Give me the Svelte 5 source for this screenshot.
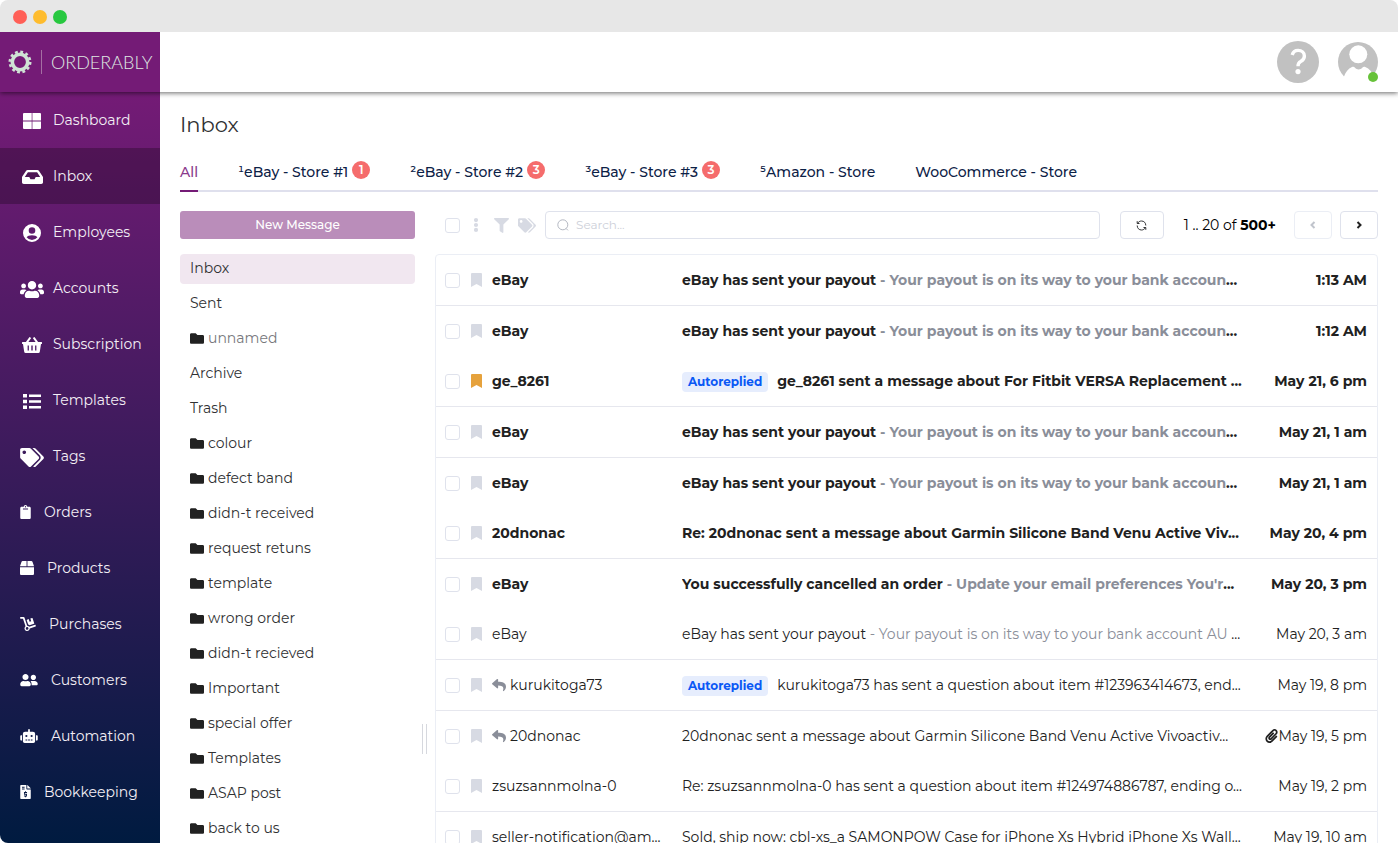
<script lang="ts">
  type Icon = { box: string; d: string };

  const icons: Record<string, Icon> = {
    grid: { box: '0 0 18 16', d: 'M1 0h7.700v7.600H0V1q0-1 1-1zM9.400 0H17q1 0 1 1v6.600H9.400zM0 8.400h8.700V16H1q-1 0-1-1zM9.400 8.400H18V15q0 1-1 1H9.400z' },
    inbox: { box: '0 64 576 384', d: 'M567.938 243.908L462.25 85.374A48.003 48.003 0 0 0 422.311 64H153.689a48 48 0 0 0-39.938 21.374L8.062 243.908A47.994 47.994 0 0 0 0 270.533V400c0 26.51 21.49 48 48 48h480c26.51 0 48-21.49 48-48V270.533a47.994 47.994 0 0 0-8.062-26.625zM162.252 128h251.497l85.333 128H376l-32 64H232l-32-64H76.918l85.334-128z' },
    user: { box: '0 0 18 18', d: 'M9 0a9 9 0 1 1 0 18A9 9 0 0 1 9 0zM9 3.200a3.300 3.300 0 1 0 0 6.600 3.300 3.300 0 0 0 0-6.600zM9 11.200c-2.500 0-4.700.8-5.400 2.100a6.800 6.800 0 0 0 10.800 0c-.7-1.300-2.900-2.100-5.400-2.100z' },
    users: { box: '0 32 640 448', d: 'M96 224c35.3 0 64-28.7 64-64s-28.7-64-64-64-64 28.7-64 64 28.7 64 64 64zm448 0c35.3 0 64-28.7 64-64s-28.7-64-64-64-64 28.7-64 64 28.7 64 64 64zm32 32h-64c-17.6 0-33.5 7.1-45.1 18.6 40.3 22.1 68.9 62 75.1 109.4h66c17.7 0 32-14.3 32-32v-32c0-35.3-28.7-64-64-64zm-256 0c61.9 0 112-50.1 112-112S381.9 32 320 32 208 82.1 208 144s50.1 112 112 112zm76.8 32h-8.3c-20.8 10-43.9 16-68.5 16s-47.6-6-68.5-16h-8.3C179.6 288 128 339.6 128 403.2V432c0 26.5 21.5 48 48 48h288c26.5 0 48-21.5 48-48v-28.8c0-63.600-51.600-115.200-115.200-115.200zm-223.700-13.400C161.500 263.100 145.600 256 128 256H64c-35.300 0-64 28.700-64 64v32c0 17.700 14.300 32 32 32h65.900c6.300-47.400 34.900-87.300 75.200-109.400z' },
    basket: { box: '0 0 20 16', d: 'M7.500 0 9.200 1 6.400 5H3.900zM12.500 0 10.800 1l2.800 4h2.500zM.5 5h19q.5 0 .5.500v1q0 .6-.6.600H19l-1.200 7.700q-.2 1.200-1.400 1.200H3.600q-1.200 0-1.400-1.200L1 7.100H.6Q0 7.100 0 6.500v-1Q0 5 .5 5zM5.600 8.500v5h1.300v-5zM9.300 8.500v5h1.400v-5zM13.100 8.500v5h1.300v-5z' },
    list: { box: '0 0 18 15', d: 'M0 0h4v3.500H0zM6 .500h12v2.500H6zM0 5.700h4v3.500H0zM6 6.200h12v2.500H6zM0 11.500h4V15H0zM6 12h12v2.500H6z' },
    tags: { box: '0 0 640 512', d: 'M497.941 225.941L286.059 14.059A48 48 0 0 0 252.118 0H48C21.49 0 0 21.49 0 48v204.118a48 48 0 0 0 14.059 33.941l211.882 211.882c18.744 18.745 49.136 18.746 67.882 0l204.118-204.118c18.745-18.745 18.745-49.137 0-67.882zM112 160c-26.51 0-48-21.49-48-48s21.49-48 48-48 48 21.49 48 48-21.49 48-48 48zm513.941 133.823L421.823 497.941c-18.745 18.745-49.137 18.745-67.882 0l-.36-.36L527.64 323.522c16.999-16.999 26.36-39.6 26.36-63.64s-9.362-46.641-26.36-63.64L331.397 0h48.721a48 48 0 0 1 33.941 14.059l211.882 211.882c18.745 18.745 18.745 49.137 0 67.882z' },
    clipboard: { box: '0 0 384 512', d: 'M384 112v352c0 26.51-21.49 48-48 48H48c-26.51 0-48-21.49-48-48V112c0-26.51 21.49-48 48-48h80c0-35.29 28.71-64 64-64s64 28.71 64 64h80c26.51 0 48 21.49 48 48zM192 40c-13.255 0-24 10.745-24 24s10.745 24 24 24 24-10.745 24-24-10.745-24-24-24m96 114v-20a6 6 0 0 0-6-6H102a6 6 0 0 0-6 6v20a6 6 0 0 0 6 6h180a6 6 0 0 0 6-6z' },
    box: { box: '0 0 512 512', d: 'M509.5 184.6L458.9 32.8C452.4 13.2 434.1 0 413.4 0H272v192h238.7c-.4-2.500-.4-5-1.200-7.400zM240 0H98.600c-20.700 0-39 13.200-45.500 32.800L2.500 184.600c-.8 2.400-.8 4.900-1.200 7.400H240V0zM0 224v240c0 26.500 21.500 48 48 48h416c26.500 0 48-21.500 48-48V224H0z' },
    dolly: { box: '0 0 576 512', d: 'M294.2 277.7c18 5 34.700 13.400 49.500 24.700l161.500-53.800c8.400-2.800 12.900-11.900 10.100-20.200L454.900 47.200c-2.800-8.400-11.900-12.900-20.200-10.100l-61.100 20.400 33.100 99.400L346 177l-33.100-99.400-61.600 20.500c-8.400 2.800-12.900 11.900-10.100 20.200l53 159.400zm281 48.700L565 296c-2.800-8.400-11.900-12.900-20.200-10.100l-213.500 71.200c-17.200-22-43.600-36.400-73.500-37L158.400 21.900C154 8.800 141.800 0 128 0H16C7.200 0 0 7.200 0 16v32c0 8.800 7.200 16 16 16h88.900l92.200 276.700c-26.100 20.400-41.700 53.600-36 90.500 6.100 39.400 37.900 72.300 77.300 79.200 60.200 10.700 112.300-34.800 113.400-92.600l213.300-71.200c8.300-2.800 12.900-11.800 10.100-20.200zM256 464c-26.500 0-48-21.500-48-48s21.500-48 48-48 48 21.500 48 48-21.500 48-48 48z' },
    friends: { box: '0 0 640 512', d: 'M192 256c61.900 0 112-50.100 112-112S253.900 32 192 32 80 82.100 80 144s50.100 112 112 112zm76.800 32h-8.300c-20.800 10-43.900 16-68.500 16s-47.600-6-68.500-16h-8.300C51.600 288 0 339.600 0 403.200V432c0 26.500 21.500 48 48 48h288c26.500 0 48-21.500 48-48v-28.800c0-63.600-51.600-115.200-115.200-115.200zM480 256c53 0 96-43 96-96s-43-96-96-96-96 43-96 96 43 96 96 96zm48 32h-3.800c-13.900 4.800-28.600 8-44.200 8s-30.300-3.200-44.200-8H432c-20.400 0-39.200 5.900-55.700 15.400 24.400 26.300 39.700 61.200 39.700 99.800v38.400c0 2.200-.5 4.300-.6 6.400H592c26.500 0 48-21.500 48-48 0-61.900-50.100-112-112-112z' },
    robot: { box: '0 0 640 512', d: 'M32,224H64V416H32A31.962,31.962,0,0,1,0,384V256A31.962,31.962,0,0,1,32,224Zm512-48V448a64.063,64.063,0,0,1-64,64H160a64.063,64.063,0,0,1-64-64V176a79.974,79.974,0,0,1,80-80H288V32a32,32,0,0,1,64,0V96H464A79.974,79.974,0,0,1,544,176ZM264,256a40,40,0,1,0-40,40A39.997,39.997,0,0,0,264,256Zm-8,128H192v32h64Zm96,0H288v32h64ZM456,256a40,40,0,1,0-40,40A39.997,39.997,0,0,0,456,256Zm-8,128H384v32h64ZM640,256V384a31.962,31.962,0,0,1-32,32H576V224h32A31.962,31.962,0,0,1,640,256Z' },
    invoice: { box: '0 0 384 512', d: 'M224 136V0H24C11 0 0 11 0 24v464c0 13 11 24 24 24h336c13 0 24-11 24-24V160H248c-13 0-24-11-24-24zM64 64h96v32H64zM64 128h96v32H64zM384 122v6H256V0h6zM176 224h32v32h40v32h-80v32h80v96h-40v32h-32v-32h-40v-32h80v-32h-80v-96h40z' },
    folder: { box: '0 64 512 384', d: 'M464 128H272l-64-64H48C21.49 64 0 85.49 0 112v288c0 26.51 21.49 48 48 48h416c26.51 0 48-21.49 48-48V176c0-26.51-21.49-48-48-48z' },
    bookmark: { box: '0 0 11 14', d: 'M0 1q0-1 1-1h9q1 0 1 1v13l-5.500-3L0 14z' },
    reply: { box: '0 0 512 512', d: 'M8.309 189.836L184.313 37.851C199.719 24.546 224 35.347 224 56.015v80.053c160.629 1.839 288 34.032 288 186.258 0 61.441-39.581 122.309-83.333 154.132-13.653 9.931-33.111-2.533-28.077-18.631 45.344-145.012-21.507-183.51-176.59-185.742V360c0 20.7-24.3 31.453-39.687 18.164l-176.004-152c-11.071-9.562-11.086-26.753 0-36.328z' },
    clip: { box: '0 0 448 512', d: 'M43.246 466.142c-58.43-60.289-57.341-157.511 1.386-217.581L254.392 34c44.316-45.332 116.351-45.336 160.671 0 43.89 44.894 43.943 117.329 0 162.276L232.214 383.128c-29.855 30.537-78.633 30.111-107.982-.998-28.275-29.97-27.368-77.473 1.452-106.953l143.743-146.835c6.182-6.314 16.312-6.422 22.626-.241l22.861 22.379c6.315 6.182 6.422 16.312.241 22.626L171.427 319.927c-4.932 5.045-5.236 13.428-.648 18.292 4.372 4.634 11.245 4.711 15.688.165l182.849-186.851c19.613-20.062 19.613-52.725-.011-72.798-19.189-19.627-49.957-19.637-69.154 0L90.39 293.295c-34.763 35.56-35.299 93.12-1.191 128.313 34.01 35.093 88.985 35.137 123.058.286l172.06-175.999c6.177-6.319 16.307-6.433 22.626-.256l22.877 22.364c6.319 6.177 6.434 16.307.256 22.626l-172.06 175.998c-59.576 60.938-155.943 60.216-214.77-.485z' },
    dots: { box: '0 0 6 14', d: 'M3 0a2.100 2.100 0 1 1 0 4.200A2.100 2.100 0 0 1 3 0zM3 4.900a2.100 2.100 0 1 1 0 4.200 2.100 2.100 0 0 1 0-4.200zM3 9.800A2.100 2.100 0 1 1 3 14a2.100 2.100 0 0 1 0-4.200z' },
    filter: { box: '0 0 512 512', d: 'M487.976 0H24.028C2.71 0-8.047 25.866 7.058 40.971L192 225.941V432c0 7.831 3.821 15.17 10.237 19.662l80 55.98C298.02 518.69 320 507.493 320 487.98V225.941l184.947-184.97C520.021 25.896 509.338 0 487.976 0z' }
  };

  // large: icon sits in a 24px slot; the rest keep their own width
  const menu = [
    { label: 'Dashboard', icon: 'grid', w: 18, h: 16, large: true },
    { label: 'Inbox', icon: 'inbox', w: 21, h: 14, large: true },
    { label: 'Employees', icon: 'user', w: 18, h: 18, large: true },
    { label: 'Accounts', icon: 'users', w: 24, h: 17, large: true },
    { label: 'Subscription', icon: 'basket', w: 20, h: 16, large: true },
    { label: 'Templates', icon: 'list', w: 18, h: 15, large: true },
    { label: 'Tags', icon: 'tags', w: 24, h: 19, large: true },
    { label: 'Orders', icon: 'clipboard', w: 11, h: 14 },
    { label: 'Products', icon: 'box', w: 14, h: 14 },
    { label: 'Purchases', icon: 'dolly', w: 16, h: 14 },
    { label: 'Customers', icon: 'friends', w: 18, h: 14 },
    { label: 'Automation', icon: 'robot', w: 18, h: 14 },
    { label: 'Bookkeeping', icon: 'invoice', w: 11, h: 14 }
  ];

  const tabs = [
    { label: 'All', count: 0 },
    { label: '¹eBay - Store #1', count: 1 },
    { label: '²eBay - Store #2', count: 3 },
    { label: '³eBay - Store #3', count: 3 },
    { label: '⁵Amazon - Store', count: 0 },
    { label: 'WooCommerce - Store', count: 0 }
  ];

  const folders = [
    { name: 'Inbox' },
    { name: 'Sent' },
    { name: 'unnamed', custom: true, muted: true },
    { name: 'Archive' },
    { name: 'Trash' },
    { name: 'colour', custom: true },
    { name: 'defect band', custom: true },
    { name: 'didn-t received', custom: true },
    { name: 'request retuns', custom: true },
    { name: 'template', custom: true },
    { name: 'wrong order', custom: true },
    { name: 'didn-t recieved', custom: true },
    { name: 'Important', custom: true },
    { name: 'special offer', custom: true },
    { name: 'Templates', custom: true },
    { name: 'ASAP post', custom: true },
    { name: 'back to us', custom: true }
  ];

  type Message = {
    from: string;
    subject: string;
    preview?: string;
    date: string;
    unread?: boolean;
    flagged?: boolean;
    tag?: string;
    replied?: boolean;
    attachment?: boolean;
    line?: boolean;
  };

  const messages: Message[] = [
    { from: 'eBay', subject: 'eBay has sent your payout', preview: ' - Your payout is on its way to your bank accoun', date: '1:13 AM', unread: true, line: true },
    { from: 'eBay', subject: 'eBay has sent your payout', preview: ' - Your payout is on its way to your bank accoun', date: '1:12 AM', unread: true },
    { from: 'ge_8261', subject: 'ge_8261 sent a message about For Fitbit VERSA Replacement ', date: 'May 21, 6 pm', unread: true, flagged: true, tag: 'Autoreplied', line: true },
    { from: 'eBay', subject: 'eBay has sent your payout', preview: ' - Your payout is on its way to your bank accoun', date: 'May 21, 1 am', unread: true, line: true },
    { from: 'eBay', subject: 'eBay has sent your payout', preview: ' - Your payout is on its way to your bank accoun', date: 'May 21, 1 am', unread: true },
    { from: '20dnonac', subject: 'Re: 20dnonac sent a message about Garmin Silicone Band Venu Active Viv', date: 'May 20, 4 pm', unread: true, line: true },
    { from: 'eBay', subject: 'You successfully cancelled an order', preview: " - Update your email preferences You'r", date: 'May 20, 3 pm', unread: true },
    { from: 'eBay', subject: 'eBay has sent your payout', preview: ' - Your payout is on its way to your bank account AU ', date: 'May 20, 3 am', line: true },
    { from: 'kurukitoga73', subject: 'kurukitoga73 has sent a question about item #123963414673, end', date: 'May 19, 8 pm', tag: 'Autoreplied', replied: true, line: true },
    { from: '20dnonac', subject: '20dnonac sent a message about Garmin Silicone Band Venu Active Vivoactiv', date: 'May 19, 5 pm', replied: true, attachment: true },
    { from: 'zsuzsannmolna-0', subject: 'Re: zsuzsannmolna-0 has sent a question about item #124974886787, ending o', date: 'May 19, 2 pm', line: true },
    { from: 'seller-notification@am...', subject: 'Sold, ship now: cbl-xs_a SAMONPOW Case for iPhone Xs Hybrid iPhone Xs Wall', date: 'May 19, 10 am', line: true }
  ];

  let activeMenu = $state('Inbox');
  let activeTab = $state('All');
  let activeFolder = $state('Inbox');
  let search = $state('');
  let checked = $state(messages.map(() => false));
  let allChecked = $state(false);

  function toggleAll() {
    checked = checked.map(() => allChecked);
  }
</script>

{#snippet icon(name: string, w: number, h: number)}
  <svg width={w} height={h} viewBox={icons[name].box} fill="currentColor" aria-hidden="true">
    <path fill-rule="evenodd" d={icons[name].d} />
  </svg>
{/snippet}

<div class="window">
  <div class="titlebar">
    <span class="light red"></span>
    <span class="light yellow"></span>
    <span class="light green"></span>
  </div>

  <header class="header">
    <a class="logo" href="#home">
      <svg width="24" height="24" viewBox="0 0 24 24" fill="none" stroke="#cfe3d5" aria-hidden="true">
        <circle cx="12" cy="12" r="7.700" stroke-width="3.600" />
        <circle cx="12" cy="12" r="10.200" stroke-width="2.600" stroke-dasharray="2.800 2.540" />
      </svg>
      <span class="divider"></span>
      <span class="brand">ORDERABLY</span>
    </a>
    <div class="account">
      <button class="round" aria-label="Help">
        <svg width="42" height="42" viewBox="0 0 42 42" aria-hidden="true">
          <circle cx="21" cy="21" r="21" fill="#c1c1c1" />
          <path d="M15.200 14c.8-3 3-4.600 5.900-4.600 3.700 0 6.300 2.300 6.300 5.500 0 2.700-1.500 4.400-3.700 5.500-2 1-2.700 2-2.700 4.800" fill="none" stroke="#fff" stroke-width="3.400" />
          <circle cx="21" cy="30.600" r="2.600" fill="#fff" />
        </svg>
      </button>
      <button class="round" aria-label="Profile">
        <svg width="40" height="40" viewBox="0 0 40 40" aria-hidden="true">
          <circle cx="20" cy="20" r="20" fill="#c1c1c1" />
          <circle cx="20.300" cy="12.300" r="9" fill="#fff" />
          <path d="M6 34.500c1.800-4.500 4-7.800 8-9.500 1.500-.6 2.200-.2 3 .8 1.800 2.300 5.500 2.300 7.300 0 .8-1 1.500-1.400 3-.8 4 1.700 7 5 8.700 9.500V40H6z" fill="#fff" />
        </svg>
        <span class="status"></span>
      </button>
    </div>
  </header>

  <div class="body">
    <nav class="sidebar">
      {#each menu as item}
        <a
          href="#{item.label.toLowerCase()}"
          class="menu-item {activeMenu === item.label ? 'active' : ''}"
          onclick={() => (activeMenu = item.label)}
        >
          <span class="menu-icon {item.large ? 'large' : ''}">{@render icon(item.icon, item.w, item.h)}</span>
          <span>{item.label}</span>
        </a>
      {/each}
    </nav>

    <main class="page">
      <h1>Inbox</h1>

      <div class="tabs" role="tablist">
        {#each tabs as tab}
          <button
            role="tab"
            aria-selected={activeTab === tab.label}
            class="tab {activeTab === tab.label ? 'active' : ''}"
            onclick={() => (activeTab = tab.label)}
          >
            {tab.label}{#if tab.count}<span class="count">{tab.count}</span>{/if}
          </button>
        {/each}
      </div>

      <div class="mail">
        <aside class="folders">
          <button class="new-message">New Message</button>
          <ul>
            {#each folders as folder}
              <li>
                <a
                  href="#folder-{folder.name.replaceAll(' ', '-')}"
                  class="folder {activeFolder === folder.name ? 'active' : ''} {folder.muted ? 'muted' : ''}"
                  onclick={() => (activeFolder = folder.name)}
                >
                  {#if folder.custom}{@render icon('folder', 14, 11)}{/if}
                  <span>{folder.name}</span>
                </a>
              </li>
            {/each}
          </ul>
          <span class="resizer"></span>
        </aside>

        <section class="content">
          <div class="toolbar">
            <input type="checkbox" aria-label="Select all" bind:checked={allChecked} onchange={toggleAll} />
            <div class="actions">
              <button aria-label="More actions">{@render icon('dots', 6, 14)}</button>
              <button aria-label="Filter">{@render icon('filter', 15, 15)}</button>
              <button aria-label="Tags">{@render icon('tags', 18, 15)}</button>
            </div>
            <label class="search">
              <svg width="12" height="12" viewBox="0 0 12 12" fill="none" stroke="#b4b8c2" aria-hidden="true">
                <circle cx="5.800" cy="5.800" r="5" />
                <path d="M9 9.400l2 2" />
              </svg>
              <input type="text" placeholder="Search..." aria-label="Search" bind:value={search} />
            </label>
            <button class="btn refresh" aria-label="Refresh">
              <svg width="11" height="11" viewBox="0 0 11 11" fill="none" stroke="#303133" aria-hidden="true">
                <path d="M1.200 1.200v2.300h2.300M1.500 3.500C2.500 1.800 3.800 1 5.500 1 8 1 9.800 2.800 9.800 5.500M9.800 9.800V7.500H7.500M9.500 7.500C8.500 9.200 7.200 10 5.500 10 3 10 1.200 8.200 1.200 5.500" />
              </svg>
            </button>
            <span class="range">1 .. 20 of <b>500+</b></span>
            <div class="pager">
              <button class="btn" aria-label="Previous page" disabled>
                <svg width="8" height="8" viewBox="0 0 8 8" fill="none" stroke="currentColor" stroke-width="2" aria-hidden="true"><path d="M5.500 1L2.500 4l3 3" /></svg>
              </button>
              <button class="btn" aria-label="Next page">
                <svg width="8" height="8" viewBox="0 0 8 8" fill="none" stroke="currentColor" stroke-width="2" aria-hidden="true"><path d="M2.500 1l3 3-3 3" /></svg>
              </button>
            </div>
          </div>

          <div class="list">
            <table>
              <colgroup>
                <col class="col-check" />
                <col class="col-flag" />
                <col class="col-from" />
                <col />
                <col class="col-date" />
              </colgroup>
              <tbody>
                {#each messages as message, i}
                  <tr class="{message.unread ? 'unread' : ''} {message.line ? 'line' : ''}">
                    <td class="check"><input type="checkbox" aria-label="Select message" bind:checked={checked[i]} /></td>
                    <td>
                      <button class="flag {message.flagged ? 'on' : ''}" aria-label="Bookmark">{@render icon('bookmark', 11, 14)}</button>
                    </td>
                    <td class="from">
                      {#if message.replied}<span class="reply">{@render icon('reply', 14, 14)}</span>{/if}{message.from}
                    </td>
                    <td class="subject">
                      {#if message.tag}<span class="tag">{message.tag}</span>{/if}{message.subject}{#if message.preview}<span class="preview">{message.preview}</span>{/if}...
                    </td>
                    <td class="date">
                      {#if message.attachment}<span class="clip">{@render icon('clip', 13, 14)}</span>{/if}{message.date}
                    </td>
                  </tr>
                {/each}
              </tbody>
            </table>
          </div>
        </section>
      </div>
    </main>
  </div>
</div>

<style>
  :global(body) {
    margin: 0;
    background: #fff;
  }

  .window {
    display: flex;
    flex-direction: column;
    height: 100vh;
    overflow: hidden;
    border-radius: 8px;
    background: #fff;
    color: #212121;
    font-family: Montserrat, Inter, 'Noto Sans', sans-serif;
    font-size: 14px;
    line-height: 20px;
  }

  button {
    padding: 0;
    border: none;
    background: none;
    color: inherit;
    font: inherit;
    cursor: pointer;
  }

  a {
    color: inherit;
    text-decoration: none;
  }

  svg {
    display: block;
    flex: none;
  }

  input[type='checkbox'] {
    appearance: none;
    display: block;
    flex: none;
    width: 15px;
    height: 15px;
    margin: 0;
    border: 1px solid #dfe2ec;
    border-radius: 3px;
    background: #fff;
  }

  input[type='checkbox']:checked {
    background: #741b76;
  }

  .titlebar {
    position: relative;
    z-index: 3;
    display: flex;
    flex: none;
    align-items: center;
    gap: 6px;
    height: 32px;
    padding: 2px 13px 0;
    box-sizing: border-box;
    background: #e7e7e7;
  }

  .light {
    width: 14px;
    height: 14px;
    border-radius: 50%;
  }

  .red {
    background: #ff5f57;
  }

  .yellow {
    background: #febc2e;
  }

  .green {
    background: #28c840;
  }

  .header {
    position: relative;
    z-index: 2;
    display: flex;
    flex: none;
    justify-content: space-between;
    height: 60px;
    background: #fff;
    box-shadow: 0 1px 5px rgba(0, 0, 0, 0.6);
  }

  .logo {
    display: flex;
    align-items: center;
    width: 160px;
    padding-left: 8px;
    box-sizing: border-box;
    background: #741b76;
  }

  .divider {
    width: 1px;
    height: 24px;
    margin: 0 9px;
    background: #a56fa3;
  }

  .brand {
    color: #dfe8e2;
    font-family: Lato, sans-serif;
    font-size: 18px;
    font-weight: 300;
  }

  .account {
    display: flex;
    align-items: center;
    gap: 19px;
    padding-right: 20px;
  }

  .round {
    position: relative;
  }

  .status {
    position: absolute;
    right: 0;
    bottom: 0;
    width: 10px;
    height: 10px;
    border-radius: 50%;
    background: #67c23a;
  }

  .body {
    display: flex;
    flex: 1;
    min-height: 0;
  }

  .sidebar {
    flex: none;
    width: 160px;
    background: linear-gradient(#741b76, #001b40);
    color: #fff;
  }

  .menu-item {
    display: flex;
    align-items: center;
    gap: 13px;
    height: 56px;
    padding-left: 20px;
    color: #f3eef5;
  }

  .menu-item.active {
    background: rgba(0, 0, 0, 0.25);
  }

  .menu-icon {
    color: #fff;
  }

  .menu-icon.large {
    display: flex;
    justify-content: center;
    width: 24px;
    margin-right: -4px;
    padding-top: 2px;
  }

  .page {
    flex: 1;
    min-width: 0;
    padding: 18px 20px 0;
  }

  h1 {
    margin: 0;
    color: #303133;
    font-size: 21px;
    font-weight: 400;
    line-height: 30px;
  }

  .tabs {
    display: flex;
    gap: 40px;
    height: 50px;
    border-bottom: 2px solid #dfe0ed;
    color: #0c2146;
    font-weight: 500;
  }

  .tab {
    display: flex;
    align-items: center;
    height: 52px;
    padding-top: 14px;
    box-sizing: border-box;
    border-bottom: 2px solid transparent;
  }

  .tab.active {
    border-color: #741b76;
    color: #8a3a8c;
  }

  .count {
    width: 18px;
    height: 18px;
    margin: 0 0 5px 4px;
    border-radius: 50%;
    background: #f56c6c;
    color: #fff;
    font-size: 12px;
    font-weight: 600;
    line-height: 18px;
    text-align: center;
  }

  .mail {
    display: grid;
    grid-template-columns: 235px minmax(0, 1fr);
    gap: 20px;
    padding-top: 19px;
  }

  .folders {
    position: relative;
  }

  .new-message {
    display: block;
    width: 100%;
    height: 28px;
    border-radius: 3px;
    background: #ba8dba;
    color: #fff;
    font-size: 12px;
    font-weight: 500;
  }

  ul {
    display: flex;
    flex-direction: column;
    gap: 5px;
    margin: 15px 0 0;
    padding: 0;
    list-style: none;
  }

  .folder {
    display: flex;
    align-items: center;
    gap: 4px;
    height: 28px;
    padding: 0 10px 2px;
    border-radius: 4px;
    color: #303133;
  }

  .folder svg {
    color: #212121;
  }

  .folder.active {
    background: #f1e7f0;
  }

  .folder.muted {
    color: #77787c;
  }

  /* drag handle between the folder list and the messages */
  .resizer {
    position: absolute;
    top: 513px;
    right: -12px;
    width: 3px;
    height: 30px;
    border: solid #d6d8de;
    border-width: 0 1px;
    cursor: col-resize;
  }

  .toolbar {
    display: flex;
    align-items: center;
    height: 28px;
    padding-left: 10px;
  }

  .actions {
    display: flex;
    align-items: center;
    gap: 9px;
    margin: 0 9px 0 13px;
    color: #d7dae3;
  }

  .actions button:first-child {
    margin-right: 6px;
  }

  .search {
    display: flex;
    flex: 1;
    align-items: center;
    gap: 7px;
    min-width: 0;
    height: 26px;
    padding: 0 11px;
    border: 1px solid #dfe2ec;
    border-radius: 4px;
  }

  .search input {
    flex: 1;
    min-width: 0;
    padding: 0;
    border: none;
    outline: none;
    background: none;
    color: #303133;
    font: inherit;
    font-size: 12px;
  }

  .search input::placeholder {
    color: #cdd0d9;
  }

  .btn {
    display: flex;
    align-items: center;
    justify-content: center;
    width: 38px;
    height: 28px;
    border: 1px solid #dfe2ec;
    border-radius: 4px;
  }

  .btn:disabled {
    border-color: #ebeef5;
    color: #c0c4cc;
  }

  .refresh {
    width: 44px;
    margin: 0 20px;
  }

  .range {
    color: #000;
    white-space: nowrap;
  }

  .pager {
    display: flex;
    gap: 8px;
    margin-left: 18px;
  }

  .list {
    margin-top: 15px;
    border: 1px solid #ebeef5;
    border-radius: 4px;
  }

  table {
    width: 100%;
    border-collapse: separate;
    border-spacing: 0;
    table-layout: fixed;
  }

  .col-check {
    width: 35px;
  }

  .col-flag {
    width: 21px;
  }

  .col-from {
    width: 190px;
  }

  .col-date {
    width: 120px;
  }

  td {
    height: 50px;
    padding: 0;
    overflow: hidden;
    white-space: nowrap;
  }

  .line td {
    border-bottom: 1px solid #e6e7ee;
  }

  .unread {
    font-weight: 700;
  }

  .check {
    padding-left: 9px;
  }

  .flag {
    display: block;
    color: #d7dae3;
  }

  .flag.on {
    color: #e6a23c;
  }

  .reply {
    display: inline-block;
    margin-right: 4px;
    color: #8a8e99;
    vertical-align: -2px;
  }

  .preview {
    color: #8a8e99;
    white-space: pre;
  }

  .tag {
    display: inline-block;
    margin-right: 9px;
    padding: 0 6px;
    border-radius: 4px;
    background: #e6edfd;
    color: #0a58f5;
    font-size: 12px;
    font-weight: 700;
  }

  .date {
    padding-right: 10px;
    text-align: right;
  }

  .clip {
    display: inline-block;
    vertical-align: -2px;
  }
</style>
